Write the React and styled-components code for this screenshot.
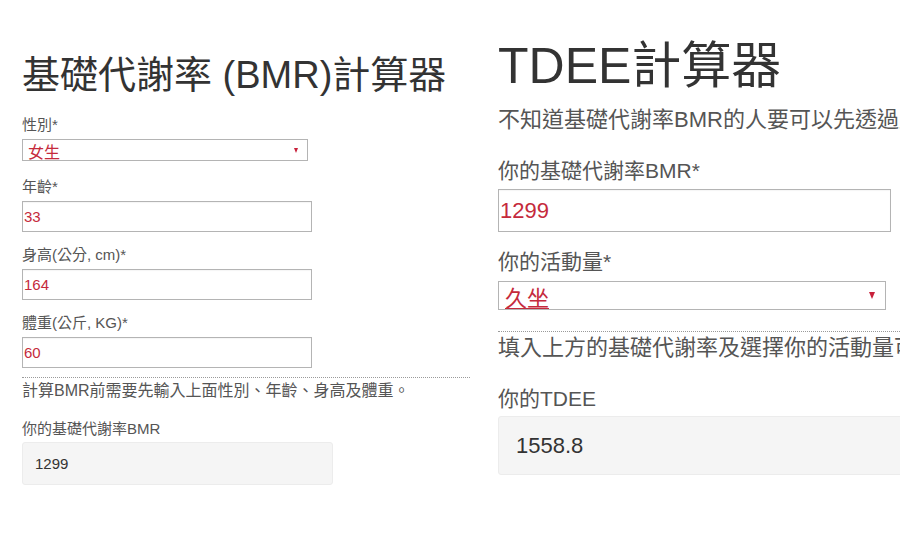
import React from "react";
import styled, { createGlobalStyle } from "styled-components";

const GlobalStyle = createGlobalStyle`
  html, body {
    margin: 0;
    padding: 0;
    background: #fff;
  }
  body {
    font-family: "Liberation Sans", "Noto Sans CJK TC", sans-serif;
  }
`;

const Page = styled.div`
  width: 900px;
  height: 540px;
  overflow: hidden;
  display: flex;
  align-items: flex-start;
  gap: 28px;
  padding-left: 22px;
  box-sizing: border-box;
  background: #fff;
`;

const Panel = styled.section`
  flex-shrink: 0;
  width: ${(p) => p.$width}px;
  padding-top: ${(p) => p.$top}px;
  display: flex;
  flex-direction: column;
  align-items: flex-start;
`;

const Title = styled.h1`
  margin: 0 0 ${(p) => p.$gap}px;
  font-size: ${(p) => p.$size}px;
  line-height: ${(p) => p.$line}px;
  font-weight: 400;
  color: #333;
  white-space: nowrap;
`;

const Text = styled.p`
  margin: 0 0 ${(p) => p.$gap}px;
  font-size: ${(p) => p.$size}px;
  line-height: ${(p) => p.$line}px;
  color: #555;
  white-space: nowrap;
`;

const Label = styled.label`
  display: block;
  margin-bottom: ${(p) => p.$gap}px;
  font-size: ${(p) => p.$size}px;
  line-height: ${(p) => p.$line}px;
  color: #555;
  white-space: nowrap;
`;

const Field = styled.div`
  display: flex;
  flex-direction: column;
  align-items: flex-start;
  margin-bottom: ${(p) => p.$gap}px;
`;

const Input = styled.div`
  width: ${(p) => p.$width}px;
  height: ${(p) => p.$height}px;
  box-sizing: border-box;
  border: 1px solid #b4b4b4;
  box-shadow: inset 0 1px 1px rgba(0, 0, 0, 0.04);
  background: #fff;
  display: flex;
  align-items: center;
  padding-left: 1px;
  font-size: ${(p) => p.$size}px;
  color: #c52a3c;
`;

const Select = styled.div`
  width: ${(p) => p.$width}px;
  height: ${(p) => p.$height}px;
  box-sizing: border-box;
  border: 1px solid #b4b4b4;
  background: #fff;
  display: flex;
  align-items: center;
  justify-content: space-between;
  padding: 0 ${(p) => p.$arrowGap}px 0 ${(p) => p.$indent}px;
  overflow: hidden;
`;

const SelectValue = styled.span`
  align-self: flex-start;
  padding-top: ${(p) => p.$drop}px;
  font-size: ${(p) => p.$size}px;
  line-height: ${(p) => p.$height}px;
  color: #c52a3c;
  text-decoration: ${(p) => (p.$underline ? "underline" : "none")};
  text-underline-offset: 2px;
`;

const Arrow = styled.span`
  width: 0;
  height: 0;
  border-left: ${(p) => p.$size / 2}px solid transparent;
  border-right: ${(p) => p.$size / 2}px solid transparent;
  border-top: ${(p) => p.$size}px solid #c8213b;
`;

const Divider = styled.hr`
  align-self: stretch;
  width: ${(p) => p.$width}px;
  margin: 0 0 ${(p) => p.$gap}px;
  border: 0;
  border-top: 1px dotted #9a9a9a;
  height: 0;
`;

const Output = styled.div`
  width: ${(p) => p.$width}px;
  height: ${(p) => p.$height}px;
  box-sizing: border-box;
  background: #f5f5f5;
  border: 1px solid #ececec;
  border-radius: 3px;
  display: flex;
  align-items: center;
  padding-left: ${(p) => p.$indent}px;
  font-size: ${(p) => p.$size}px;
  color: #333;
`;

const BmrForm = () => (
  <Panel $width={448} $top={53}>
    <Title $size={38} $line={44} $gap={19}>
      基礎代謝率 (BMR)計算器
    </Title>
    <Field $gap={17}>
      <Label $size={15} $line={18} $gap={5}>
        性別*
      </Label>
      <Select $width={286} $height={22} $indent={5} $arrowGap={9}>
        <SelectValue $size={16} $height={20} $drop={3}>
          女生
        </SelectValue>
        <Arrow $size={5} />
      </Select>
    </Field>
    <Field $gap={14}>
      <Label $size={15} $line={18} $gap={5}>
        年齡*
      </Label>
      <Input $width={290} $height={31} $size={15}>
        33
      </Input>
    </Field>
    <Field $gap={14}>
      <Label $size={15} $line={18} $gap={5}>
        身高(公分, cm)*
      </Label>
      <Input $width={290} $height={31} $size={15}>
        164
      </Input>
    </Field>
    <Field $gap={9}>
      <Label $size={15} $line={18} $gap={5}>
        體重(公斤, KG)*
      </Label>
      <Input $width={290} $height={31} $size={15}>
        60
      </Input>
    </Field>
    <Divider $width={448} $gap={3} />
    <Text $size={16} $line={20} $gap={19}>
      計算BMR前需要先輸入上面性別、年齡、身高及體重。
    </Text>
    <Field $gap={0}>
      <Label $size={15} $line={18} $gap={4}>
        你的基礎代謝率BMR
      </Label>
      <Output $width={311} $height={43} $indent={12} $size={15}>
        1299
      </Output>
    </Field>
  </Panel>
);

const TdeeForm = () => (
  <Panel $width={420} $top={38}>
    <Title $size={50} $line={56} $gap={12}>
      TDEE計算器
    </Title>
    <Text $size={22} $line={28} $gap={23}>
      不知道基礎代謝率BMR的人要可以先透過上方的BMR計算器計算
    </Text>
    <Field $gap={16}>
      <Label $size={21} $line={28} $gap={4}>
        你的基礎代謝率BMR*
      </Label>
      <Input $width={393} $height={43} $size={22}>
        1299
      </Input>
    </Field>
    <Field $gap={21}>
      <Label $size={21} $line={28} $gap={5}>
        你的活動量*
      </Label>
      <Select $width={388} $height={29} $indent={6} $arrowGap={10}>
        <SelectValue $size={22} $height={27} $drop={3} $underline>
          久坐
        </SelectValue>
        <Arrow $size={7} />
      </Select>
    </Field>
    <Divider $width={420} $gap={2} />
    <Text $size={22} $line={28} $gap={23}>
      填入上方的基礎代謝率及選擇你的活動量可以計算出你的TDEE
    </Text>
    <Field $gap={0}>
      <Label $size={21} $line={28} $gap={3}>
        你的TDEE
      </Label>
      <Output $width={420} $height={59} $indent={17} $size={22}>
        1558.8
      </Output>
    </Field>
  </Panel>
);

export default function App() {
  return (
    <>
      <GlobalStyle />
      <Page>
        <BmrForm />
        <TdeeForm />
      </Page>
    </>
  );
}
